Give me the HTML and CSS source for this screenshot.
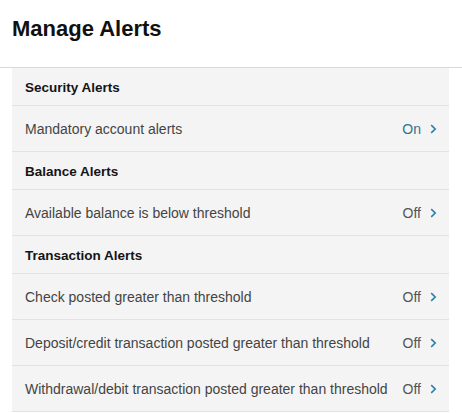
FILE: index.html
```html
<!DOCTYPE html>
<html lang="en">
<head>
<meta charset="utf-8">
<title>Manage Alerts</title>
<link rel="stylesheet" href="styles.css">
</head>
<body>
<header class="page-header">
  <h1 class="title">Manage Alerts</h1>
</header>
<main class="panel">
  <div class="section">Security Alerts</div>
  <a class="item" href="#">
    <span class="label">Mandatory account alerts</span>
    <span class="status on">On</span>
    <svg class="chev" width="7" height="10" viewBox="0 0 7 10"><path d="M1.2 1.2 L5.2 5 L1.2 8.8" fill="none" stroke="currentColor" stroke-width="1.6"/></svg>
  </a>
  <div class="section">Balance Alerts</div>
  <a class="item" href="#">
    <span class="label">Available balance is below threshold</span>
    <span class="status">Off</span>
    <svg class="chev" width="7" height="10" viewBox="0 0 7 10"><path d="M1.2 1.2 L5.2 5 L1.2 8.8" fill="none" stroke="currentColor" stroke-width="1.6"/></svg>
  </a>
  <div class="section">Transaction Alerts</div>
  <a class="item" href="#">
    <span class="label">Check posted greater than threshold</span>
    <span class="status">Off</span>
    <svg class="chev" width="7" height="10" viewBox="0 0 7 10"><path d="M1.2 1.2 L5.2 5 L1.2 8.8" fill="none" stroke="currentColor" stroke-width="1.6"/></svg>
  </a>
  <a class="item" href="#">
    <span class="label">Deposit/credit transaction posted greater than threshold</span>
    <span class="status">Off</span>
    <svg class="chev" width="7" height="10" viewBox="0 0 7 10"><path d="M1.2 1.2 L5.2 5 L1.2 8.8" fill="none" stroke="currentColor" stroke-width="1.6"/></svg>
  </a>
  <a class="item" href="#">
    <span class="label">Withdrawal/debit transaction posted greater than threshold</span>
    <span class="status">Off</span>
    <svg class="chev" width="7" height="10" viewBox="0 0 7 10"><path d="M1.2 1.2 L5.2 5 L1.2 8.8" fill="none" stroke="currentColor" stroke-width="1.6"/></svg>
  </a>
</main>
</body>
</html>
```

FILE: styles.css
```css
* { box-sizing: border-box; }
html, body {
  margin: 0;
  padding: 0;
  background: #ffffff;
  font-family: "Liberation Sans", Arial, sans-serif;
}
.page-header {
  height: 68px;
  border-bottom: 1px solid #d9d9d9;
  display: flex;
  align-items: center;
  padding-left: 12px;
  padding-bottom: 10px;
}
.title {
  margin: 0;
  font-size: 22px;
  font-weight: bold;
  color: #111;
}
.panel {
  margin: 0 13px 0 12px;
  background: #f4f4f4;
  display: flex;
  flex-direction: column;
}
.section {
  height: 38px;
  display: flex;
  align-items: center;
  padding: 1px 12px 0 13px;
  border-bottom: 1px solid #e2e2e2;
  font-size: 13.5px;
  font-weight: bold;
  color: #151515;
}
.item {
  height: 46px;
  display: flex;
  align-items: center;
  padding: 0 12px 0 13px;
  border-bottom: 1px solid #e2e2e2;
  font-size: 14px;
  color: #444;
  text-decoration: none;
}
.label { flex: 1; }
.status {
  color: #555;
  margin-right: 9px;
}
.status.on { color: #2f7491; }
.chev {
  color: #2a7fa6;
  display: block;
}
```
